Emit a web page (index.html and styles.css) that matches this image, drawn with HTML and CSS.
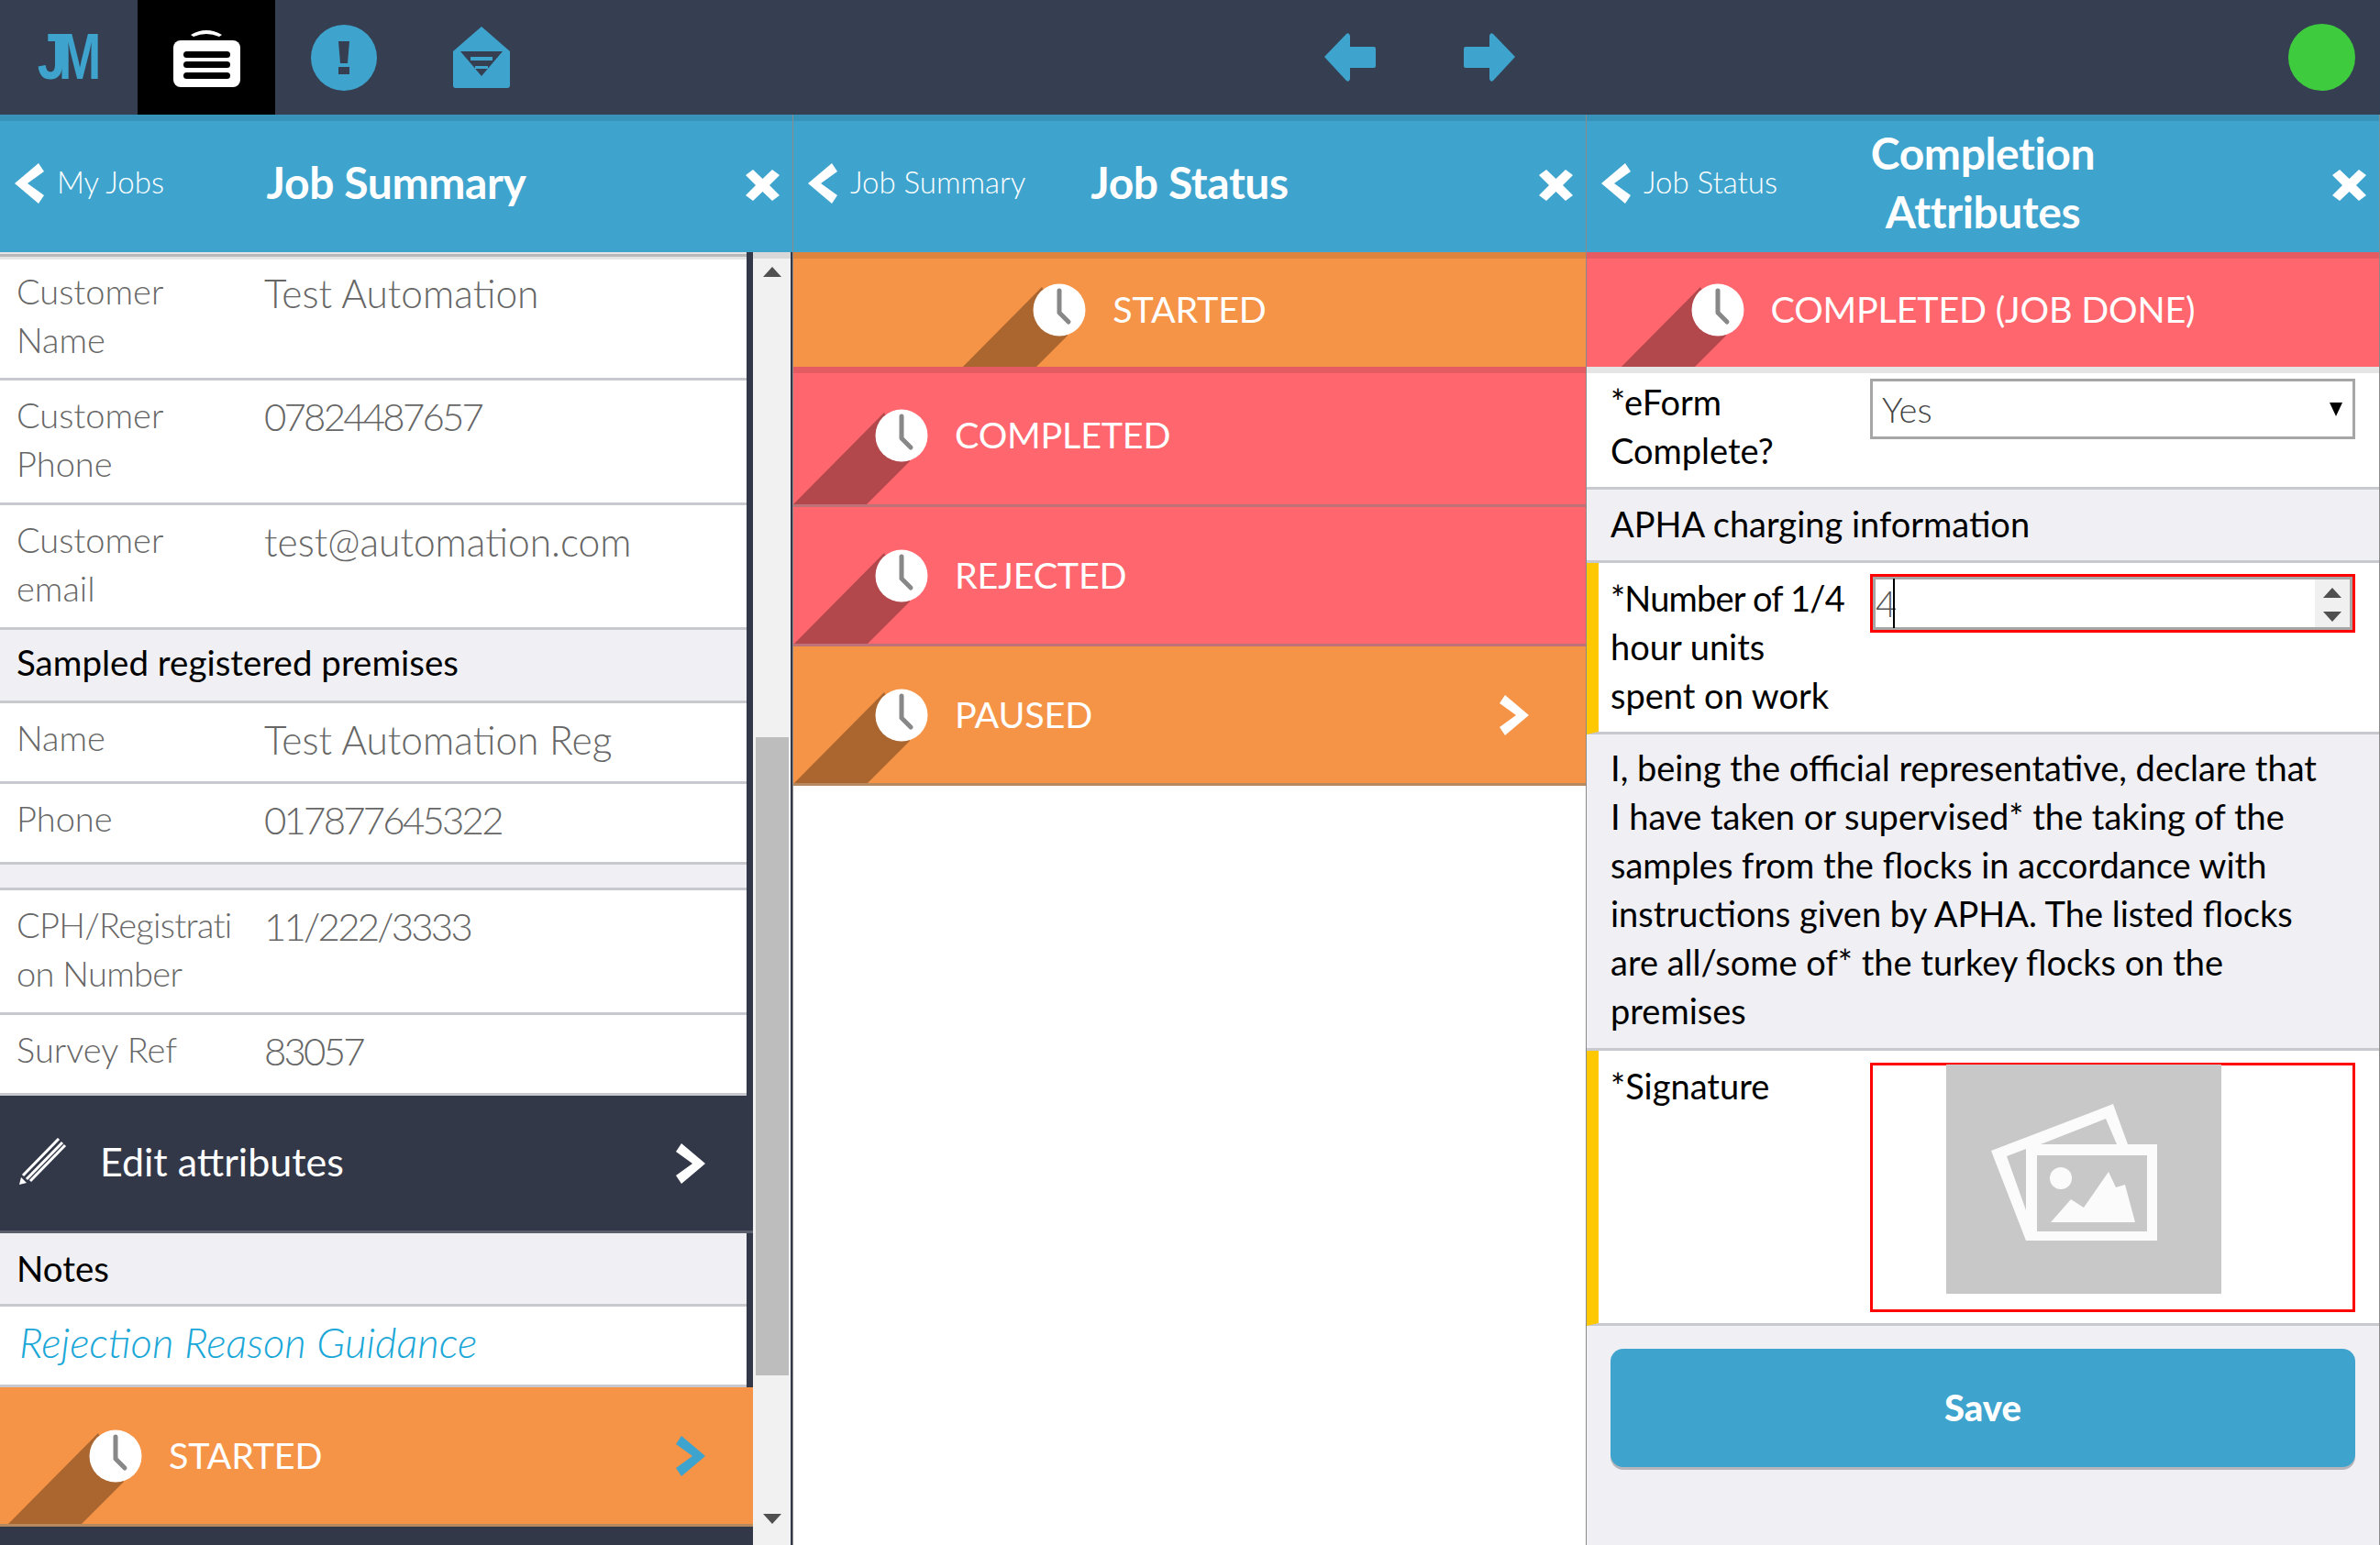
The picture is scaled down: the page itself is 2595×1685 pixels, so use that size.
FILE: index.html
```html
<!DOCTYPE html>
<html lang="en">
<head>
    <meta charset="UTF-8">
    <title>Job Manager</title>
    <link rel="stylesheet" href="styles.css">
</head>
<body>
<svg class="defs" width="0" height="0">
    <symbol id="clock" viewBox="0 0 147 150">
        <polygon points="99,50 127,103 80,150 0,150" fill="rgba(0,0,0,0.3)"/>
        <circle cx="118" cy="75" r="28.5" fill="#fff"/>
        <polyline points="118,54 118,78 128,88" fill="none" stroke="#888" stroke-width="5" stroke-linecap="round" stroke-linejoin="round"/>
    </symbol>
    <symbol id="back" viewBox="0 0 32 44"><polygon points="26,0 32,9 14,22 32,35 26,44 0,22"/></symbol>
    <symbol id="next" viewBox="0 0 32 44"><polygon points="6,0 32,22 6,44 0,35 18,22 0,9"/></symbol>
    <symbol id="close" viewBox="0 0 37 34"><polygon points="0,6 8,0 18.500,10 29,0 37,6 26,17 37,28 29,34 18.500,24 8,34 0,28 11,17"/></symbol>
</svg>

<div class="topbar">
    <div class="tab"><span class="logo">JM</span></div>
    <div class="tab tab-active">
        <svg width="75" height="66" viewBox="0 0 75 66">
            <path d="M20 8 Q37 -2 54 8 L51 10 Q37 4 23 10Z" fill="#fff"/>
            <rect x="1" y="14" width="73" height="51" rx="8" fill="#fff"/>
            <rect x="12" y="26" width="51" height="7" rx="3.500"/>
            <rect x="12" y="37" width="51" height="7" rx="3.500"/>
            <rect x="12" y="49" width="51" height="7" rx="3.500"/>
        </svg>
    </div>
    <div class="tab">
        <svg width="72" height="72" viewBox="0 0 72 72">
            <circle cx="36" cy="36" r="36" fill="#3ea4ce"/>
            <polygon points="30,18 42,18 40,42 32,42" fill="#363f52"/>
            <rect x="30" y="46" width="12" height="8" fill="#363f52"/>
        </svg>
    </div>
    <div class="tab">
        <svg width="64" height="68" viewBox="0 0 64 68">
            <path d="M32 0 L63 27 V64 Q63 67 60 67 H4 Q1 67 1 64 V27Z" fill="#3ea4ce"/>
            <polygon points="9,27 55,27 32,54" fill="#363f52"/>
            <rect x="20" y="33" width="24" height="4" fill="#3ea4ce"/>
            <rect x="25" y="43" width="14" height="3" fill="#3ea4ce"/>
        </svg>
    </div>
    <div class="nav-arrows">
        <svg width="56" height="53" viewBox="0 0 56 53"><path d="M0 26 L24 1 Q27 -1 28 3 V15 H54 Q56 15 56 17 V36 Q56 38 54 38 H28 V50 Q27 54 24 52Z" fill="#3ea4ce"/></svg>
        <svg width="56" height="53" viewBox="0 0 56 53"><path d="M56 26 L32 1 Q29 -1 28 3 V15 H2 Q0 15 0 17 V36 Q0 38 2 38 H28 V50 Q29 54 32 52Z" fill="#3ea4ce"/></svg>
    </div>
    <div class="status-dot"></div>
</div>

<div class="panels">
    <!-- job summary -->
    <div class="panel panel-dark">
        <div class="panel-head">
            <a class="back"><svg class="chev"><use href="#back"/></svg>My Jobs</a>
            <h2>Job Summary</h2>
            <svg class="close"><use href="#close"/></svg>
        </div>
        <div class="panel-scroll">
            <div class="scroll-content">
                <div class="list">
                    <div class="row tall first"><span class="key">Customer<br>Name</span><span class="val">Test Automation</span></div>
                    <div class="row tall"><span class="key">Customer<br>Phone</span><span class="val val-num">07824487657</span></div>
                    <div class="row tall"><span class="key">Customer<br>email</span><span class="val">test@automation.com</span></div>
                    <div class="section">Sampled registered premises</div>
                    <div class="row"><span class="key">Name</span><span class="val">Test Automation Reg</span></div>
                    <div class="row"><span class="key">Phone</span><span class="val val-num">017877645322</span></div>
                    <div class="section section-empty"></div>
                    <div class="row tall"><span class="key key-tight">CPH/Registrati<br>on Number</span><span class="val val-num">11/222/3333</span></div>
                    <div class="row"><span class="key">Survey Ref</span><span class="val val-num">83057</span></div>
                </div>
                <div class="edit-row">
                    <svg class="pencil" width="54" height="52" viewBox="0 0 52 52">
                        <polygon points="1,51 3,43 9,49" fill="#fff"/>
                        <path d="M5 41 L44 1 M9 45 L48 5 M13 47 L51 8" stroke="#fff" stroke-width="3" fill="none"/>
                    </svg>
                    <span class="edit-label">Edit attributes</span>
                    <svg class="chev-next"><use href="#next"/></svg>
                </div>
                <div class="list">
                    <div class="section section-notes">Notes</div>
                    <div class="row link-row"><i>Rejection Reason Guidance</i></div>
                </div>
                <div class="status orange shift">
                    <svg class="badge"><use href="#clock"/></svg>
                    <span>STARTED</span>
                    <svg class="chev-next chev-blue"><use href="#next"/></svg>
                </div>
            </div>
            <div class="scrollbar">
                <div class="arrow-up"></div>
                <div class="thumb"></div>
                <div class="arrow-down"></div>
            </div>
        </div>
    </div>

    <!-- job status -->
    <div class="panel">
        <div class="panel-head">
            <a class="back"><svg class="chev"><use href="#back"/></svg>Job Summary</a>
            <h2>Job Status</h2>
            <svg class="close"><use href="#close"/></svg>
        </div>
        <div class="status-top orange">
            <svg class="badge"><use href="#clock"/></svg>
            <span>STARTED</span>
        </div>
        <div class="status red">
            <svg class="badge"><use href="#clock"/></svg>
            <span>COMPLETED</span>
        </div>
        <div class="status red no-strip">
            <svg class="badge"><use href="#clock"/></svg>
            <span>REJECTED</span>
        </div>
        <div class="status orange no-strip">
            <svg class="badge"><use href="#clock"/></svg>
            <span>PAUSED</span>
            <svg class="chev-next chev-paused"><use href="#next"/></svg>
        </div>
    </div>

    <!-- completion attributes -->
    <div class="panel panel-form">
        <div class="panel-head">
            <a class="back"><svg class="chev"><use href="#back"/></svg>Job Status</a>
            <h2>Completion Attributes</h2>
            <svg class="close"><use href="#close"/></svg>
        </div>
        <div class="status-top red">
            <svg class="badge"><use href="#clock"/></svg>
            <span>COMPLETED (JOB DONE)</span>
        </div>
        <div class="form-row strip">
            <label>*eForm<br>Complete?</label>
            <div class="select">Yes<span class="select-arrow"></span></div>
        </div>
        <div class="form-section form-heading">APHA charging information</div>
        <div class="form-row required">
            <label><span class="label-tight">*Number of 1/4</span><br>hour units<br>spent on work</label>
            <div class="number-input">
                <span class="number-value">4</span><span class="caret"></span>
                <div class="spinner"><span class="arrow-up"></span><span class="arrow-down"></span></div>
            </div>
        </div>
        <div class="form-section">I, being the official representative, declare that<br>I have taken or supervised* the taking of the<br>samples from the flocks in accordance with<br>instructions given by APHA. The listed flocks<br>are all/some of* the turkey flocks on the<br>premises</div>
        <div class="form-row required signature-row">
            <label>*Signature</label>
            <div class="signature">
                <svg class="placeholder" width="300" height="250" viewBox="0 0 300 250">
                    <rect width="300" height="250" fill="#c8c8c8"/>
                    <path fill="#fbfbfb" fill-rule="evenodd" d="M182 43 L49 94 L87 192 H230 V87 H198 Z M174 59 L103 87 H186 Z M66 100 L87 92 V159 Z M99 99 H219 V182 H99 Z"/>
                    <ellipse cx="125" cy="124" rx="12" ry="12" fill="#fbfbfb"/>
                    <polygon points="114,172 136,147 150,156 177,117 185,134 195,131 206,172" fill="#fbfbfb"/>
                </svg>
            </div>
        </div>
        <div class="form-actions"><button type="button" class="save">Save</button></div>
    </div>
</div>
</body>
</html>
```

FILE: styles.css
```css
* {
    box-sizing: border-box;
}

html, body {
    margin: 0;
    height: 1685px;
    overflow: hidden;
}

body {
    font-family: 'Lato', 'Open Sans', sans-serif;
    font-size: 38px;
    line-height: 53px;
    color: #000000;
    background: #ffffff;
}

.defs {
    position: absolute;
}

/* top bar */
.topbar {
    display: flex;
    align-items: center;
    height: 125px;
    background-color: #363f52;
}

.tab {
    display: flex;
    align-items: center;
    justify-content: center;
    width: 150px;
    height: 125px;
}

.tab-active {
    background-color: #000000;
}

.logo {
    margin-right: 6px;
    font-family: 'Liberation Sans', sans-serif;
    font-size: 70px;
    font-weight: bold;
    letter-spacing: -10px;
    color: #3ea4ce;
    transform: scaleX(0.8);
}

.nav-arrows {
    display: flex;
    gap: 96px;
    margin-left: 844px;
}

.status-dot {
    width: 73px;
    height: 73px;
    margin-left: 843px;
    border-radius: 50%;
    background-color: #3ecb3e;
}

/* panels */
.panels {
    display: grid;
    grid-template-columns: 864px 865px 866px;
    height: 1560px;
}

.panel {
    display: flex;
    flex-direction: column;
    min-width: 0;
    border-left: 1px solid #8a8a8a;
    background-color: #ffffff;
    overflow: hidden;
}

.panel-dark {
    border-left: none;
    background-color: #323848;
}

.panel-form {
    border-right: 1px solid #8a8a8a;
    background-color: #efeff4;
}

.panel-head {
    display: grid;
    grid-template-columns: 270px 1fr 270px;
    align-items: center;
    flex: none;
    height: 150px;
    padding-bottom: 3px;
    background-color: #3ea4ce;
    box-shadow: inset 0 7px 0 rgba(0, 0, 0, 0.1);
    color: #ffffff;
}

.panel-head h2 {
    margin: 0;
    font-size: 48px;
    line-height: 64px;
    font-weight: 700;
    letter-spacing: -0.4px;
    text-align: center;
}

.back {
    display: flex;
    align-items: center;
    padding-left: 16px;
    font-size: 33px;
    font-weight: 300;
    white-space: nowrap;
}

.chev {
    width: 32px;
    height: 44px;
    margin-top: 3px;
    margin-right: 14px;
    fill: #ffffff;
}

.close {
    justify-self: end;
    width: 37px;
    height: 34px;
    margin: 7px 14px 0 0;
    fill: #ffffff;
}

/* left panel */
.panel-scroll {
    display: flex;
    flex: 1;
    min-height: 0;
}

.scroll-content {
    width: 821px;
    flex: none;
}

.list {
    width: 814px;
    background-color: #ffffff;
}

.list:first-child {
    padding-top: 2px;
    background-color: #e5e5e5;
}

.row {
    display: grid;
    grid-template-columns: 270px 1fr;
    height: 88px;
    padding: 11px 0 0 18px;
    border-bottom: 3px solid #c8c8cf;
    background-color: #ffffff;
    font-weight: 300;
    color: #666666;
}

.row.tall {
    height: 136px;
}

.row.first {
    height: 138px;
    border-top: 3px solid #b8b8b8;
    box-shadow: inset 0 3px 0 #e5e5e5;
}

.key-tight {
    letter-spacing: -0.7px;
}

.val {
    padding-top: 2px;
    font-size: 42.5px;
}

.val-num {
    font-size: 42px;
    letter-spacing: -2.8px;
}

.section {
    height: 80px;
    padding: 9px 18px 0;
    border-bottom: 3px solid #c8c8cf;
    background-color: #efeff4;
    font-size: 38.5px;
}

.section-notes {
    padding-top: 12px;
}

.section-empty {
    height: 28px;
}

.link-row {
    display: block;
    height: 88px;
    padding: 12px 0 0 21px;
    font-size: 45.5px;
    color: #1aa7d8;
}

.edit-row {
    display: flex;
    align-items: center;
    height: 150px;
    padding-left: 19px;
    border-bottom: 3px solid #5a5f6b;
    background-color: #323848;
    color: #ffffff;
    font-size: 43px;
    font-weight: 400;
}

.edit-label {
    margin-top: -4px;
}

.pencil {
    margin-top: -3px;
    margin-right: 36px;
}

.chev-next {
    width: 32px;
    height: 44px;
    margin-left: auto;
    margin-right: 52px;
    fill: #ffffff;
}

.chev-blue {
    fill: #3ea4ce;
}

.chev-paused {
    margin-right: 62px;
}

/* scrollbar */
.scrollbar {
    position: relative;
    display: flex;
    flex-direction: column;
    align-items: center;
    width: 41px;
    flex: none;
    background-color: #f1f1f1;
    box-shadow: inset 0 7px 0 rgba(0, 0, 0, 0.1);
}

.thumb {
    position: absolute;
    top: 529px;
    left: 3px;
    width: 36px;
    height: 696px;
    background-color: #bdbdbd;
}

.arrow-up, .arrow-down {
    width: 0;
    height: 0;
    border-left: 10px solid transparent;
    border-right: 10px solid transparent;
}

.arrow-up {
    border-bottom: 11px solid #505050;
}

.arrow-down {
    border-top: 11px solid #505050;
}

.scrollbar .arrow-up {
    margin-top: 16px;
}

.scrollbar .arrow-down {
    margin-top: 1349px;
}

/* status rows */
.status, .status-top {
    align-items: center;
    flex: none;
    overflow: hidden;
    color: #ffffff;
    font-size: 39.5px;
    font-weight: 400;
    letter-spacing: -0.2px;
}

.status span, .status-top span {
    margin-top: -3px;
}

.status {
    display: flex;
    height: 153px;
    border-bottom: 3px solid #be7176;
    box-shadow: inset 0 7px 0 rgba(0, 0, 0, 0.1);
}

.status-top {
    display: grid;
    grid-template-columns: 1fr auto 1fr;
    grid-template-rows: 125px;
    height: 125px;
    box-shadow: inset 0 7px 0 rgba(0, 0, 0, 0.1);
}

.status.no-strip {
    height: 152px;
    box-shadow: none;
}

.status.shift {
    height: 152px;
    box-shadow: none;
    border-bottom-color: #b68a5e;
}

.status.orange {
    border-bottom-color: #b68a5e;
}

.orange {
    background-color: #f59346;
}

.red {
    background-color: #ff666e;
}

.badge {
    flex: none;
    width: 147px;
    height: 150px;
    margin-right: 29px;
}

.status-top .badge {
    justify-self: end;
}

.shift .badge {
    margin-left: 8px;
}

/* form */
.form-row {
    display: grid;
    grid-template-columns: 283px 1fr;
    padding: 12px 26px 13px;
    border-bottom: 3px solid #c8c8cf;
    background-color: #ffffff;
}

.form-row.strip {
    box-shadow: inset 0 7px 0 rgba(0, 0, 0, 0.1);
}

.form-row.required {
    padding-left: 13px;
    border-left: 13px solid #ffc800;
}

.label-tight {
    letter-spacing: -0.8px;
}

.form-section {
    padding: 10px 26px 14px;
    border-bottom: 3px solid #c8c8cf;
    background-color: #efeff4;
    white-space: nowrap;
}

.form-heading {
    padding: 11px 26px 13px;
}

.select {
    position: relative;
    height: 66px;
    margin-top: 1px;
    padding-left: 10px;
    border: 3px solid #a6a6a6;
    background-color: #ffffff;
    font-weight: 300;
    line-height: 60px;
    color: #444444;
}

.select-arrow {
    position: absolute;
    top: 23px;
    right: 11px;
    border-left: 7px solid transparent;
    border-right: 7px solid transparent;
    border-top: 15px solid #000000;
}

.number-input {
    position: relative;
    display: flex;
    height: 64px;
    padding-left: 3px;
    border: 3px solid #ff0000;
    background-color: #ffffff;
    box-shadow: inset 0 0 0 3px #a6a6a6;
}

.number-value {
    font-weight: 300;
    font-size: 40px;
    color: #555555;
    line-height: 58px;
}

.caret {
    width: 2px;
    height: 54px;
    margin: 2px 0 0 -4px;
    background-color: #000000;
}

.spinner {
    position: absolute;
    top: 3px;
    right: 3px;
    display: flex;
    flex-direction: column;
    align-items: center;
    gap: 15px;
    width: 38px;
    height: 52px;
    padding-top: 9px;
    background-color: #f0f0f0;
}

.signature-row {
    height: 300px;
}

.signature {
    display: flex;
    height: 272px;
    margin-top: 1px;
    padding-left: 80px;
    border: 3px solid #ff0000;
    background-color: #ffffff;
}

.placeholder {
    flex: none;
    margin-top: -1px;
}

.form-actions {
    padding: 25px 26px 0;
}

.save {
    display: block;
    width: 100%;
    height: 129px;
    padding: 0 0 2px;
    border: none;
    border-radius: 14px;
    background-color: #3ea4ce;
    box-shadow: 0 3px 0 #b5b5bb;
    color: #ffffff;
    font-family: inherit;
    font-size: 40px;
    font-weight: 900;
}
```
